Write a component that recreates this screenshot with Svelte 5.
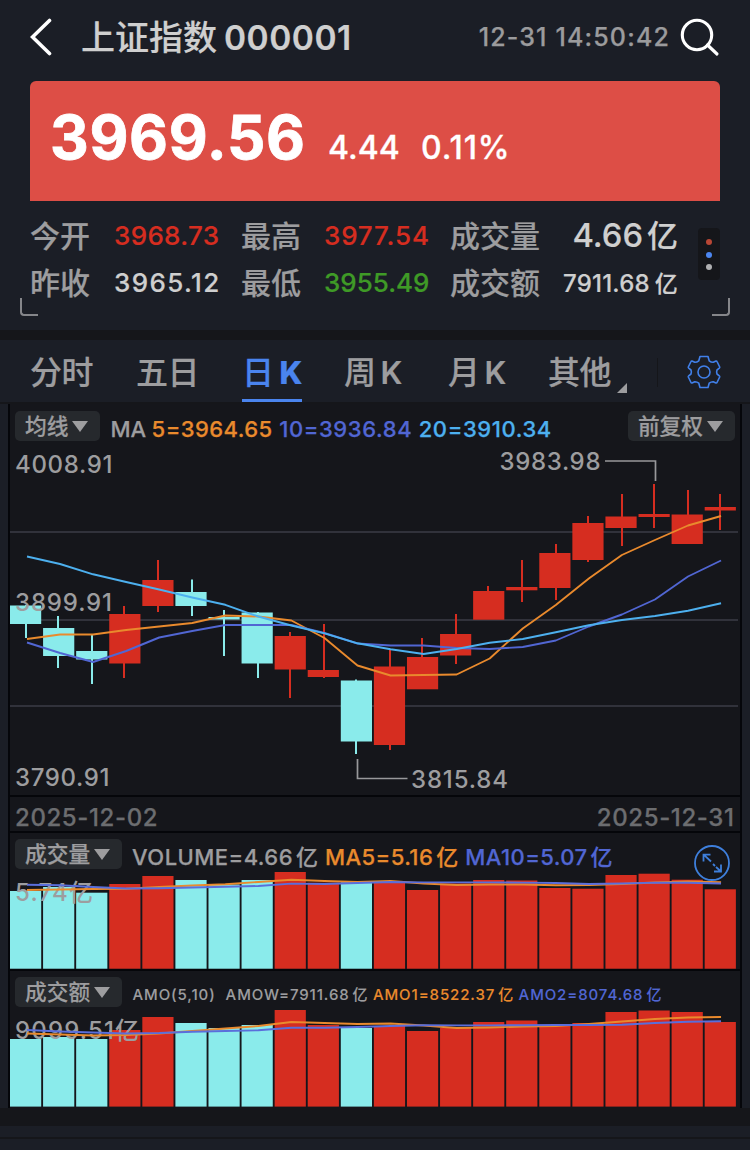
<script>
  const RED = '#d62d20';
  const CYAN = '#8aebeb';
  const STEP = 33.08;

  // kind, open/close edges, high, low (chart pixel space, top = 404)
  const candles = [
    ['d', 605.5, 624, 605, 638], ['d', 628, 656, 616, 668], ['d', 651, 659.5, 635, 684],
    ['u', 614, 663.5, 606, 678], ['u', 580, 606, 560, 612], ['d', 592, 606, 579.5, 616],
    ['d', 617, 619.5, 610, 656], ['d', 612.5, 663.5, 612, 678], ['u', 636, 669.5, 632, 698],
    ['u', 670, 677, 624, 678], ['d', 680.5, 741.5, 679.5, 754], ['u', 666.5, 745, 650, 750],
    ['u', 657, 689.3, 638, 689], ['u', 634, 655.5, 614, 664], ['u', 591, 619.7, 586, 619],
    ['u', 587, 590.3, 560, 602], ['u', 553, 588, 544, 600], ['u', 523, 560, 516, 562],
    ['u', 516.5, 528, 494, 546], ['u', 514, 517, 484, 528], ['u', 514.5, 544, 490, 544],
    ['u', 507, 510.5, 494, 530]
  ];
  const wickX = [25, 57, 91, 123, 157, 191, 223, 257, 289, 323, 355, 389, 421, 455, 487, 521, 555, 587, 621, 653, 687, 719];
  const ma5 = [639, 634.5, 634.5, 630, 626.5, 623, 615.5, 616.5, 620.5, 638, 665.5, 675.5, 675, 674.5, 658.5, 628.5, 605, 578.5, 555, 540, 525.5, 516];
  const ma10 = [642.5, 653, 662, 651, 637.5, 631, 625, 625, 625, 633, 643.5, 645.5, 645.5, 648, 649, 647, 640.5, 626.5, 614.5, 599.5, 576.5, 560.5];
  const ma20 = [556.5, 564, 574.3, 582, 589.5, 597.5, 604.8, 616.5, 625.5, 633.3, 643.3, 649.3, 654, 649, 642.7, 639, 632.3, 625.3, 620, 616, 610.7, 603.3];

  const vol = [891, 887, 892.7, 884, 876, 880, 884.5, 880, 872, 882.7, 882.3, 883, 890, 883.5, 880, 880.5, 888, 888.7, 875, 873.7, 879.7, 889.3];
  const vol5 = [890, 889.5, 889, 888.7, 887, 885.5, 884.2, 882, 879.7, 881, 882, 881, 883.5, 885, 884.5, 884.5, 885.3, 885, 884, 882.5, 881.5, 882.3];
  const vol10 = [884.8, 885.3, 887, 888.5, 888.3, 887.5, 886.8, 886, 883.6, 884, 883, 882, 882.4, 882.4, 882.4, 882.6, 883, 884, 883.5, 882.6, 882.8, 883.5];
  const amo = [1039, 1037, 1039, 1030, 1017, 1023, 1028, 1025, 1010, 1025, 1028, 1026, 1031, 1028, 1022, 1020.5, 1025, 1023, 1012, 1010.5, 1012, 1022];
  const amo5 = [1033.5, 1034.5, 1035.5, 1035, 1033.5, 1031, 1028.5, 1026, 1022, 1023, 1024, 1023.5, 1025.5, 1028, 1027.5, 1026.5, 1026, 1024, 1021.5, 1019, 1017.5, 1017];
  const amo10 = [1030, 1031.5, 1032.5, 1033.5, 1033, 1031.7, 1031, 1030.3, 1027.7, 1027.7, 1027, 1026, 1025.2, 1025.4, 1025.4, 1025.2, 1025, 1025, 1024.7, 1023, 1021.8, 1021.3];

  const pts = (a) => a.map((y, i) => `${27 + 33.05 * i},${y}`).join(' ');
  const fill = (i) => (candles[i][0] === 'u' ? RED : CYAN);
</script>

<header>
  <svg class="back" width="24" height="40" viewBox="0 0 24 40"><path d="M19.500 3.500 2.500 20l17 16.500" fill="none" stroke="#fff" stroke-width="3.600" stroke-linecap="round" stroke-linejoin="miter" /></svg>
  <h1>上证指数<b>000001</b></h1>
  <time>12-31 14:50:42</time>
  <svg class="search" width="42" height="42" viewBox="0 0 42 42" fill="none" stroke="#fff" stroke-width="3.1" stroke-linecap="round"><circle cx="19" cy="20" r="14.700" /><path d="m29.500 30 9.500 9" /></svg>
</header>

<section class="price"><strong>3969.56</strong><span class="chg">4.44</span><span class="pct">0.11%</span></section>

<section class="stats">
  <div class="grid">
    <label>今开</label><i class="red open">3968.73</i><label>最高</label><i class="red high">3977.54</i><label>成交量</label><i class="big">4.66<u>亿</u></i>
    <label>昨收</label><i class="prev">3965.12</i><label>最低</label><i class="green">3955.49</i><label>成交额</label><i class="small">7911.68<u>亿</u></i>
  </div>
  <div class="dots"><em></em><em></em><em></em></div>
  <div class="corner l"></div>
  <div class="corner r"></div>
</section>

<nav>
  <a>分时</a><a>五日</a><a class="on">日<b>K</b></a><a>周<b>K</b></a><a>月<b>K</b></a><a class="more">其他</a>
  <svg class="gear" width="34" height="34" viewBox="-17 -17 34 34" fill="none" stroke="#4180ea" stroke-width="1.600" stroke-linejoin="round"><path d="M-4-15.500H4L5.200-11.200Q7.200-9.600 9.200-9.700L12-11Q12.800-11.100 13-10.500L15.700-5Q15.900-4.300 15.300-3.800L13-2Q12.200 0 13 2L15.300 3.800Q15.900 4.300 15.700 5L13 10.500Q12.800 11.100 12 11L9.200 9.700Q7.200 9.600 5.200 11.200L4 15.500H-4L-5.200 11.200Q-7.200 9.600-9.200 9.700L-12 11Q-12.800 11.100-13 10.500L-15.700 5Q-15.900 4.300-15.300 3.800L-13 2Q-12.200 0-13-2L-15.300-3.800Q-15.900-4.300-15.700-5L-13-10.500Q-12.800-11.100-12-11L-9.200-9.700Q-7.200-9.600-5.200-11.200Z" /><circle r="6" /></svg>
</nav>

<main>
  <section class="panel k">
    <div class="legend"><button>均线<s></s></button><span class="ma">MA</span><span class="o">5=3964.65</span><span class="b">10=3936.84</span><span class="c">20=3910.34</span><button class="right">前复权<s></s></button></div>
    <svg width="730" height="391" viewBox="10 404 730 391">
      <path d="M10 532H738M10 620H738M10 706H738" stroke="#31323b" stroke-width="2" />
      {#each candles as c, i}
        <rect x={wickX[i]} y={c[3]} width="2" height={c[4] - c[3]} fill={fill(i)} />
        <rect x={10 + STEP * i} y={c[1]} width="31.200" height={c[2] - c[1]} fill={fill(i)} />
      {/each}
      <g fill="#9d9d9f" class="axis">
        <text x="15" y="473" textLength="97.500">4008.91</text>
        <text x="15" y="611" textLength="97">3899.91</text>
        <text x="15" y="786" textLength="94.500">3790.91</text>
        <text x="499.500" y="470" textLength="101">3983.98</text>
        <text x="411" y="788" textLength="97">3815.84</text>
      </g>
      <path d="M605 461H655.500V481M357.500 759V778.500H407.500" fill="none" stroke="#98989b" stroke-width="1.700" />
      <g fill="none" stroke-width="1.900" stroke-linejoin="round">
        <polyline points={pts(ma5)} stroke="#e98a2d" />
        <polyline points={pts(ma10)} stroke="#5166d3" />
        <polyline points={pts(ma20)} stroke="#4db0ef" />
      </g>
    </svg>
  </section>
  <div class="dates"><span>2025-12-02</span><span>2025-12-31</span></div>
  <section class="panel v">
    <div class="legend"><button>成交量<s></s></button><span>VOLUME=4.66<u>亿</u></span><span class="o">MA5=5.16<u>亿</u></span><span class="b">MA10=5.07<u>亿</u></span></div>
    <svg width="730" height="136" viewBox="10 833 730 136">
      {#each vol as y, i}<rect x={10 + STEP * i} {y} width="31.200" height={968.7 - y} fill={fill(i)} />{/each}
      <text class="axis" x="15" y="901" textLength="78" fill="#9d9d9f">5.74亿</text>
      <g fill="none" stroke-width="1.900" stroke-linejoin="round">
        <polyline points={pts(vol5)} stroke="#e98a2d" />
        <polyline points={pts(vol10)} stroke="#5a6edb" />
      </g>
    </svg>
    <svg class="expand" width="38" height="38" viewBox="-19 -19 38 38" fill="none" stroke="#3e7fdc" stroke-width="1.800"><circle r="17" /><path d="M-8.500-1.500V-8.300H-1.500M-8.300-8.300-1-1.500M1 1 3 3M4 4 9 8.500M9 1.500V8.500H2" /></svg>
  </section>
  <section class="panel a">
    <div class="legend tiny"><button>成交额<s></s></button><span class="w">AMO(5,10)</span><span>AMOW=7911.68<u>亿</u></span><span class="o">AMO1=8522.37<u>亿</u></span><span class="b">AMO2=8074.68<u>亿</u></span></div>
    <svg width="730" height="137" viewBox="10 971 730 137">
      {#each amo as y, i}<rect x={10 + STEP * i} {y} width="31.200" height={1106.6 - y} fill={fill(i)} />{/each}
      <text class="axis" x="15" y="1039" textLength="124" fill="#9d9d9f">9099.51亿</text>
      <g fill="none" stroke-width="1.900" stroke-linejoin="round">
        <polyline points={pts(amo5)} stroke="#e98a2d" />
        <polyline points={pts(amo10)} stroke="#5a6edb" />
      </g>
    </svg>
  </section>
</main>
<footer></footer>

<style>
  :global(body) { background: #1b1e26; }
  :global(#app) { width: 750px; height: 1150px; overflow: hidden; color: #9d9d9f; font-family: Inter, "Noto Sans CJK SC", sans-serif; font-weight: 500; }
  * { box-sizing: border-box; }
  i, u, em, s { font-style: normal; text-decoration: none; }
  svg { display: block; flex: none; }

  header { display: flex; align-items: center; height: 81px; padding: 0 30px 7px 30px; white-space: nowrap; }
  h1 { flex: 1; margin: -4px 0 0 27px; font-size: 34px; font-weight: 500; color: #cfcfcf; -webkit-text-stroke: 0.200px; }
  h1 b { margin-left: 7px; font-weight: 600; font-size: 33.500px; letter-spacing: 0.500px; }
  time { font-size: 25px; letter-spacing: 1.150px; color: #9b9b9d; -webkit-text-stroke: 0.250px; }
  .search { margin: -3px 0 0 8px; }

  .price { display: flex; align-items: baseline; height: 120px; margin: 0 30px; padding: 20px 0 0 20px; border-radius: 6px 6px 0 0; background: #dd4e46; color: #fff; line-height: 73px; }
  .price strong { width: 278px; font-size: 60px; font-weight: 700; letter-spacing: 0.700px; -webkit-text-stroke: 0.800px; }
  .price span { font-size: 32px; width: 93px; -webkit-text-stroke: 0.300px; }
  .price .pct { letter-spacing: 0.900px; }

  .stats { position: relative; display: flex; height: 129px; padding: 10px 30px 0 30px; }
  .grid { display: grid; grid-template-columns: 84px 127px 83px 126px 93px 135px; grid-auto-rows: 48px; align-items: baseline; line-height: 48px; white-space: nowrap; -webkit-text-stroke: 0.200px; }
  .grid label { font-size: 30px; }
  .grid i { position: relative; top: -2px; left: 0; font-size: 26px; color: #cfcfcf; }
  .grid .open { letter-spacing: 0.350px; }
  .grid .high { letter-spacing: 0.850px; }
  .grid .prev { letter-spacing: 1.400px; }
  .grid .red { color: #d62d20; }
  .grid .green { color: #3f9a26; }
  .grid .big, .grid .small { text-align: right; }
  .grid .big { top: 0; font-size: 32.700px; }
  .grid .small { top: -2px; font-size: 24px; letter-spacing: 0.200px; }
  .grid u { margin-left: 4px; font-size: 31px; }
  .grid .small u { margin-left: 5px; font-size: 23px; }
  .dots { display: flex; flex-direction: column; align-items: center; justify-content: space-between; width: 22px; height: 52px; margin: 17px 0 0 20px; padding: 11px 0 10px; border-radius: 4px; background: #15161a; }
  .dots em { width: 6px; height: 6px; border-radius: 50%; background: #b0b0b2; }
  .dots em:nth-child(1) { background: #b94735; }
  .dots em:nth-child(2) { background: #4c86f0; }
  .corner { position: absolute; top: 97px; width: 18px; height: 18px; border: solid #85868a; border-width: 0 0 2px; }
  .corner.l { left: 20px; border-left-width: 2px; border-bottom-left-radius: 4px; }
  .corner.r { right: 20px; border-right-width: 2px; border-bottom-right-radius: 4px; }

  nav { display: grid; grid-template-columns: 106px 106px 102px 104px 100px 110px 1fr; height: 74px; padding-left: 30px; border: solid #15161a; border-width: 10px 0 2px; line-height: 65px; font-size: 32px; }
  nav a { position: relative; height: 62px; white-space: nowrap; letter-spacing: -0.5px; -webkit-text-stroke: 0.200px; }
  nav b { margin-left: 5px; font-size: 31px; font-weight: 600; }
  nav .on { color: #4a84ee; }
  nav .on b { margin-left: 6px; font-weight: 800; }
  .on::after { content: ""; position: absolute; left: 0; bottom: 0; width: 60px; height: 3px; background: #4a84ee; }
  .more { border-right: 1px solid #15161a; border-image: linear-gradient(transparent 18px, #15161a 18px, #15161a 46px, transparent 46px) 1; }
  .more::after { content: ""; position: absolute; left: 69px; top: 43px; border: 5px solid transparent; border-right-color: #9d9d9f; border-bottom-color: #9d9d9f; }
  .gear { margin: 15px 0 0 29px; }

  main { width: 734px; height: 704px; margin: 0 8px; border: solid #05060a; border-width: 0 2px; background: #15161b; }
  .panel { position: relative; border-bottom: 2px solid #05060a; }
  .panel.a { border: 0; }
  .legend { position: absolute; left: 5px; right: 5px; top: 6px; display: flex; align-items: flex-start; height: 33px; white-space: nowrap; font-size: 22px; letter-spacing: 0.450px; line-height: 30px; -webkit-text-stroke: 0.250px; }
  .k .legend { top: 7px; }
  .legend span { height: 30px; margin: 3px 6.500px 0 0; }
  .legend .ma { letter-spacing: 0; margin-right: 5.500px; }
  .k .b, .k .c { letter-spacing: 0.600px; }
  .legend u { margin-left: 3px; }
  button { display: flex; flex: none; align-items: center; height: 30px; margin: 0 10px 0 0; padding: 0 12px 4px 10px; border: 0; border-radius: 5px; background: #26292d; color: #9d9d9f; font: 500 21.700px "Noto Sans CJK SC"; }
  button s { position: relative; top: 2px; margin-left: 4px; border: solid transparent; border-width: 11px 8px 0; border-top-color: #9d9d9f; }
  .legend .right { margin: 0 0 0 auto; }
  .o { color: #e98a2d; }
  .b { color: #5166d3; }
  .c { color: #4db0ef; }
  .tiny { font-size: 15px; letter-spacing: 0.900px; -webkit-text-stroke: 0.100px; }
  .legend.tiny span { margin: 3px 4.500px 0 0; }
  .legend.tiny .w { margin: 3px 10px 0 0.500px; }
  .axis { font: 500 24px Inter, "Noto Sans CJK SC", sans-serif; -webkit-text-stroke: 0.250px #9d9d9f; }
  .dates { display: flex; justify-content: space-between; height: 36px; padding: 3px 5.500px 0 5px; border-bottom: 2px solid #05060a; line-height: 36px; font-size: 24px; letter-spacing: 0.600px; color: #6c6d70; -webkit-text-stroke: 0.250px; }
  .expand { position: absolute; right: 9px; top: 11px; }
  footer { height: 42px; border-top: 18px solid #15161a; background: linear-gradient(transparent 11px, #15161a 11px, #15161a 13px, transparent 13px); }
</style>
